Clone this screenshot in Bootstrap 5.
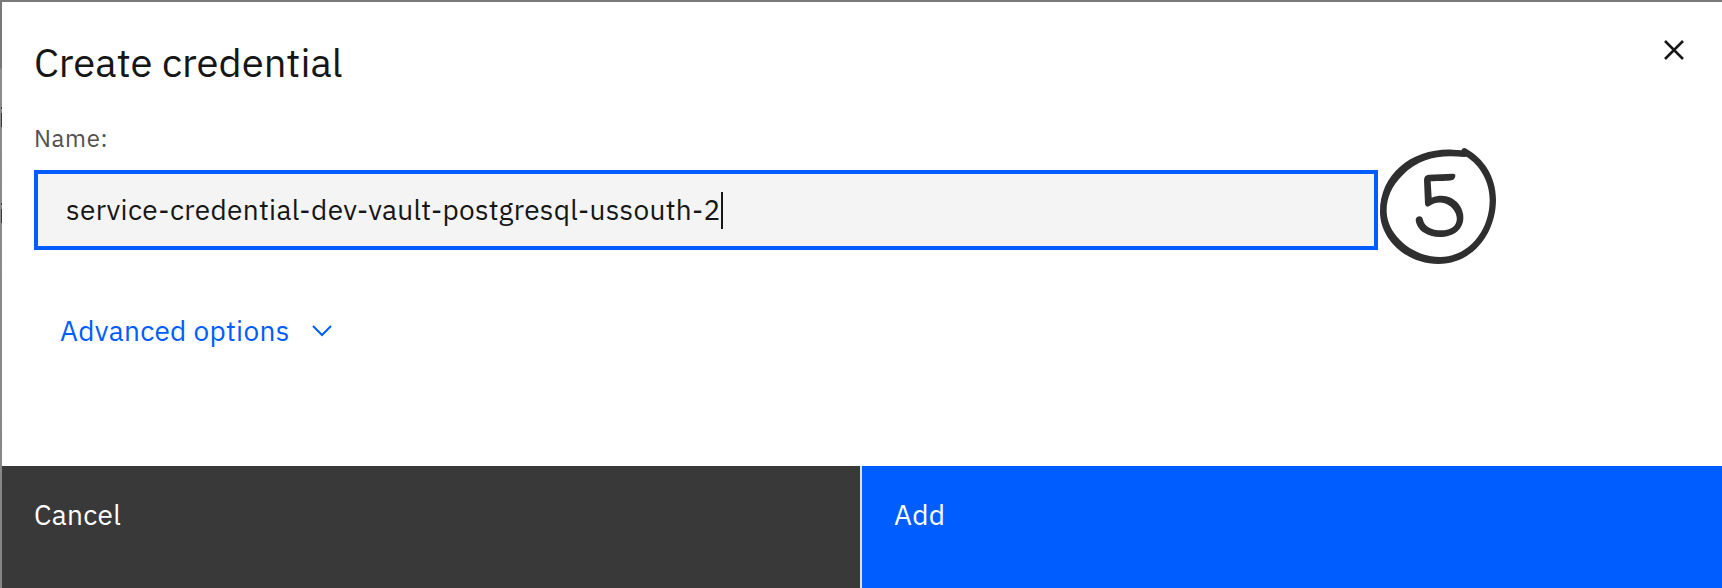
<!DOCTYPE html>
<html lang="en">
<head>
<meta charset="utf-8">
<meta name="viewport" content="width=device-width, initial-scale=1">
<title>Create credential</title>
<link href="https://cdn.jsdelivr.net/npm/bootstrap@5.3.0/dist/css/bootstrap.min.css" rel="stylesheet">
<style>
  body { font-family: "IBM Plex Sans", Roboto, "Liberation Sans", sans-serif; color: #161616; background: #fff; overflow: hidden; }
  .dialog { height: 588px; border-top: 2px solid #7b7979; }
  .page-edge { width: 2px; background: linear-gradient(#777 0 66px, #8c8c8c 67px, #858585 100%); }
  .page-edge i { left: 1px; width: 1px; height: 14px; background: #3c3c3c; }
  .page-edge i::before { content: ""; position: absolute; top: -6px; width: 1px; height: 2px; background: #3c3c3c; }
  .dialog-title { font-size: 40px; line-height: 50px; padding: 35px 0 1px 32px; font-weight: 400; }
  .field-label { font-size: 24px; line-height: 32px; letter-spacing: .64px; color: #525252; padding: 34px 0 0 32px; }
  .field-box { width: 1344px; height: 80px; margin: 16px 0 0 32px; padding: 0 0 0 28px; border: 4px solid #005dff; background: #f4f4f4; font-size: 28px; letter-spacing: .32px; }
  .caret { width: 2px; height: 37px; background: #161616; }
  .advanced { font-size: 28px; line-height: 36px; letter-spacing: .32px; color: #005dff; margin: 63px 0 0 58px; gap: 22px; }
  .close-button { top: 37px; right: 37px; width: 22px; height: 22px; }
  .step-mark { left: 1358px; top: 128px; }
  .action { font-size: 28px; line-height: 36px; letter-spacing: .32px; height: 122px; padding: 31px 32px; color: #fff; text-align: left; border: 0; }
  .action-cancel { background: #393939; width: 858px; }
  .action-add { background: #005dff; border-left: 2px solid #e0e0e0; }
</style>
</head>
<body>
<main class="dialog d-flex">
  <div class="page-edge position-relative flex-shrink-0">
    <i class="position-absolute" style="top:111px"></i>
    <i class="position-absolute" style="top:207px"></i>
  </div>
  <section class="position-relative flex-grow-1 d-flex flex-column">
    <h1 class="dialog-title m-0">Create credential</h1>
    <button class="close-button btn p-0 border-0 position-absolute d-flex" aria-label="Close">
      <svg width="22" height="22" viewBox="0 0 22 22" fill="none" stroke="#161616" stroke-width="2.5"><path d="M2 2 20 20M20 2 2 20"/></svg>
    </button>
    <div class="field-label"><span>Name:</span></div>
    <div class="field-box d-flex align-items-center" role="textbox">
      <span>service-credential-dev-vault-postgresql-ussouth-2</span><span class="caret"></span>
    </div>
    <svg class="step-mark position-absolute" width="160" height="150" viewBox="0 0 480 450" aria-label="Step">
      <path fill="#2f2f2f" fill-rule="evenodd" d="M304 61Q309 50 319 56C370 85 408 138 408 209C408 310 338 402 235 402C140 402 60 328 60 246C60 130 158 54 278 59ZM312 81C240 73 178 84 129 134C94 169 79 204 80 245C82 315 158 381 240 381C323 381 389 305 389 210C389 154 359 104 319 80Z"/>
      <path fill="#2f2f2f" d="M207 134L278 131C288 130 288 140 282 147C277 153 265 152 212 154L215 203C246 191 276 198 296 222C315 246 316 283 293 303C267 326 218 327 190 307C178 299 169 285 167 271C167 259 183 254 188 266C193 291 216 302 248 301C286 299 298 273 286 248C270 218 237 208 208 228Q198 234 195 222L192 150Q192 135 207 134Z"/>
    </svg>
    <a class="advanced d-flex align-items-center text-decoration-none" href="#">
      <span>Advanced options</span>
      <svg width="20" height="12" viewBox="0 0 20 12" fill="none" stroke="#005dff" stroke-width="2"><path d="M1 1 10 10 19 1"/></svg>
    </a>
    <footer class="d-flex mt-auto">
      <button class="action action-cancel d-flex align-items-start"><span>Cancel</span></button>
      <button class="action action-add flex-grow-1 d-flex align-items-start"><span>Add</span></button>
    </footer>
  </section>
</main>
<script src="https://cdn.jsdelivr.net/npm/bootstrap@5.3.0/dist/js/bootstrap.bundle.min.js"></script>
</body>
</html>
